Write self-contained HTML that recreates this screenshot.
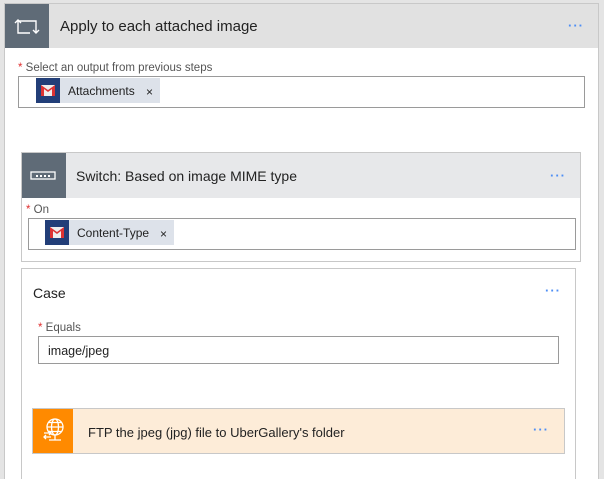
<!DOCTYPE html>
<html><head><meta charset="utf-8"><style>
*{box-sizing:border-box;margin:0;padding:0}
html,body{width:604px;height:479px;overflow:hidden}
body{background:#e4e4e4;font-family:"Liberation Sans",sans-serif;position:relative}
.a{position:absolute}
.dots{position:absolute;color:#4d8ef5;font-size:13px;letter-spacing:1px;font-weight:bold}
.lbl{position:absolute;font-size:11.5px;color:#555}
.lbl b{color:#e03030;font-weight:normal}
.inp{position:absolute;border:1px solid #9a9a9a;background:#fff}
.tok{position:absolute;background:#dde2ea;height:25px;font-size:12px;color:#222}
.tok .ic{position:absolute;left:0;top:0;width:24px;height:25px;background:#223e78}
.tok .t{position:absolute;left:32px;top:6px}
.tok .x{position:absolute;top:7px;font-size:12px}
</style></head><body>
<div class="a" style="left:4px;top:3px;width:595px;height:480px;background:#fff;border:1px solid #c8c8c8"></div>
<div class="a" style="left:5px;top:4px;width:593px;height:44px;background:#e1e1e1"></div>
<div class="a" style="left:5px;top:4px;width:44px;height:44px;background:#5f6b77">
<svg width="44" height="44" viewBox="0 0 44 44"><g fill="none" stroke="#fff" stroke-width="1.4"><path d="M13 16v13H25"/><path d="M10 19l3-3 3 3"/><path d="M13 17h18v12"/><path d="M28 26l3 3 3-3"/></g></svg></div>
<div class="a" style="left:60px;top:18px;font-size:15px;color:#222">Apply to each attached image</div>
<div class="dots" style="left:568px;top:18px">···</div>
<div class="lbl" style="left:18px;top:62px"><b>*</b> Select an output from previous steps</div>
<div class="inp" style="left:18px;top:76px;width:567px;height:32px"></div>
<div class="tok" style="left:36px;top:78px;width:124px"><div class="ic"><svg width="24" height="25"><rect x="5" y="7" width="14" height="11" fill="#eee"/><path d="M5 7v11h3v-7l4 3 4-3v7h3V7l-7 5z" fill="#d33"/></svg></div><span class="t">Attachments</span><span class="x" style="left:110px">×</span></div>

<div class="a" style="left:21px;top:152px;width:560px;height:110px;border:1px solid #c8c8c8;background:#fff"></div>
<div class="a" style="left:22px;top:153px;width:558px;height:45px;background:#e7e8ea"></div>
<div class="a" style="left:22px;top:153px;width:44px;height:45px;background:#5f6b77"><svg width="44" height="45"><rect x="9" y="19" width="24" height="7" fill="none" stroke="#fff" stroke-width="1.3"/><g fill="#fff"><rect x="14" y="22" width="2" height="2"/><rect x="18" y="22" width="2" height="2"/><rect x="22" y="22" width="2" height="2"/><rect x="26" y="22" width="2" height="2"/></g></svg></div>
<div class="a" style="left:76px;top:168px;font-size:14px;color:#222">Switch: Based on image MIME type</div>
<div class="dots" style="left:550px;top:168px">···</div>
<div class="lbl" style="left:26px;top:204px"><b>*</b> On</div>
<div class="inp" style="left:28px;top:218px;width:548px;height:32px"></div>
<div class="tok" style="left:45px;top:220px;width:129px"><div class="ic"><svg width="24" height="25"><rect x="5" y="7" width="14" height="11" fill="#eee"/><path d="M5 7v11h3v-7l4 3 4-3v7h3V7l-7 5z" fill="#d33"/></svg></div><span class="t">Content-Type</span><span class="x" style="left:115px">×</span></div>

<div class="a" style="left:21px;top:268px;width:555px;height:220px;border:1px solid #c8c8c8;background:#fff"></div>
<div class="a" style="left:33px;top:285px;font-size:14px;color:#222">Case</div>
<div class="dots" style="left:545px;top:283px">···</div>
<div class="lbl" style="left:38px;top:322px"><b>*</b> Equals</div>
<div class="inp" style="left:38px;top:336px;width:521px;height:28px"></div>
<div class="a" style="left:48px;top:344px;font-size:12.5px;color:#222">image/jpeg</div>

<div class="a" style="left:32px;top:408px;width:533px;height:46px;border:1px solid #c8c8c8;background:#fdecd8"></div>
<div class="a" style="left:33px;top:409px;width:40px;height:44px;background:#ff8a00"><svg width="40" height="44" viewBox="0 0 40 44"><g fill="none" stroke="#fff" stroke-width="1.3"><circle cx="22" cy="18" r="8"/><ellipse cx="22" cy="18" rx="3.5" ry="8"/><path d="M14 18h16M15.5 13.5h13M15.5 22.5h13M22 26v5M16 31h12"/><path d="M11 24h7M16 22l2 2-2 2M18 28h-7M13 26l-2 2 2 2"/></g></svg></div>
<div class="a" style="left:88px;top:425px;font-size:13px;color:#222">FTP the jpeg (jpg) file to UberGallery's folder</div>
<div class="dots" style="left:533px;top:422px">···</div>
</body></html>
